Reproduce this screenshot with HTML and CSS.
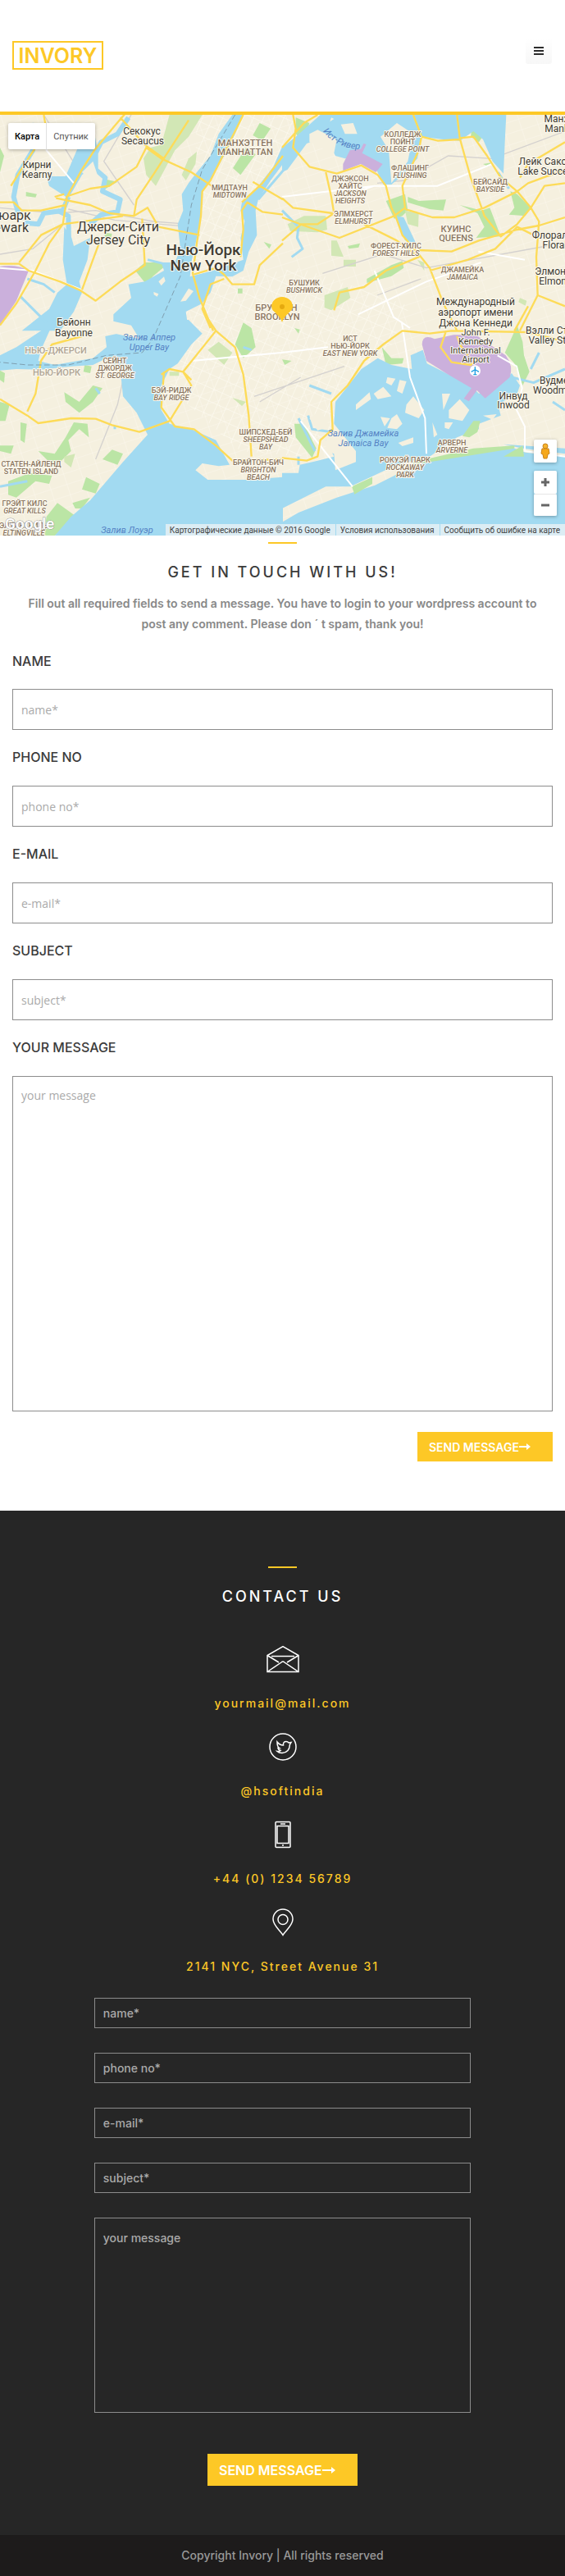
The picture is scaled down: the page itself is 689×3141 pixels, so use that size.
FILE: index.html
```html
<!DOCTYPE html>
<html lang="en">

<head>
    <meta charset="utf-8">
    <meta name="viewport" content="width=device-width, initial-scale=1.0">
    <title>Invory</title>
    <link rel="stylesheet" href="styles.css">
</head>

<body>
    <header class="header">
        <a class="logo" href="#">INVORY</a>
        <button class="menu-btn" type="button" aria-label="Menu">
            <span></span>
            <span></span>
            <span></span>
        </button>
    </header>

    <section class="map">
        <svg class="map-img" viewBox="0 0 689 513" preserveAspectRatio="xMidYMid slice">
            <!-- land, water and roads are drawn at three times the size, one group per quarter -->
            <svg width="689" height="513" viewBox="0 0 2067 1539">
                <defs>
                    <pattern id="streets" width="34" height="46" patternUnits="userSpaceOnUse" patternTransform="rotate(24)">
                        <path d="M0 0H34M0 0V46" stroke="#fffdf6" stroke-width="3" fill="none" />
                    </pattern>
                    <pattern id="streets2" width="62" height="40" patternUnits="userSpaceOnUse" patternTransform="rotate(-18)">
                        <path d="M0 0H62M0 0V40" stroke="#fbf8ee" stroke-width="3" fill="none" />
                    </pattern>
                </defs>
                <rect width="2067" height="1539" fill="#f5f0df" />
                <rect width="2067" height="1539" fill="url(#streets2)" />
                <path d="M720 0H1080L1020 220 900 400 860 560 700 600ZM700 620L1100 560 1500 700 1330 1060 1100 1250 880 1230 620 1000Z" fill="url(#streets)" />

                <!-- parks -->
                <g class="park" transform="translate(0 -30)">
                    <path class="light" d="M620 30H740L690 110 640 160 570 290 535 250 525 190 550 150 590 140Z" />
                    <path class="light" d="M720 165L715 210 680 270 665 250 690 190Z" />
                    <path d="M950 60L990 80 960 125 925 105ZM900 150L935 175 880 250 852 225ZM380 265L430 275 370 310ZM95 312L135 320 130 332 95 328ZM0 150L15 180 0 240ZM965 495L993 505 985 520ZM530 570L620 570 560 620 535 650 495 600ZM380 460L410 465 405 485 385 480ZM285 680L290 700 265 755 250 740ZM870 665H887V683H870Z" />
                </g>
                <g class="park" transform="translate(1032 -30)">
                    <path d="M50 40L100 60 80 130 50 100ZM695 75L740 100 720 130 690 110ZM380 345L450 320 460 380 440 400 410 410ZM460 330L500 345 600 340 590 380 540 375 460 350ZM650 360L730 380 760 370 800 475 710 480 740 440 715 390ZM835 310L860 320 910 370 890 400 830 395 850 370ZM240 510L285 500 280 515 245 520ZM310 630L400 580 440 565 445 590 400 620 310 645ZM735 210L765 205 755 220Z" />
                    <path class="light" d="M20 430L80 400 160 400 165 450 130 460 30 455ZM180 490L200 490 225 550 180 545ZM225 560L270 560 270 585H225ZM450 380L500 390 498 440 460 430ZM155 690L240 660 250 700 180 745 155 735ZM495 560L520 570 520 600ZM870 700L895 710 890 728 865 715Z" />
                </g>
                <g class="park" transform="translate(0 750)">
                    <path d="M860 90L890 10 920 30 935 100 890 140ZM340 240L375 250 340 300 290 340 240 300 235 265 290 300ZM75 375L98 380 90 450 75 440ZM270 375L320 380 325 430 290 400 250 440 260 480 200 540 140 480 200 490 240 430ZM0 300L35 310 20 370 0 370ZM0 460L50 460 40 490 0 480ZM30 590L110 560 190 570 180 600 130 590 60 650 30 640ZM315 575L365 600 350 635 300 620ZM410 475L450 490 430 530 375 510ZM170 720L210 670 280 720 200 790H160ZM265 670L330 650 300 690 275 690ZM310 165L335 170 330 195 305 190ZM0 185L18 195 15 230 0 220Z" />
                    <path class="light" d="M760 110L800 80 850 120 820 165ZM620 190H655V205H620ZM850 285L900 300 885 315ZM235 500L275 490 260 540 235 520Z" />
                </g>
                <g class="park" transform="translate(1032 750)">
                    <path d="M45 380L80 380 125 470 110 505 50 430ZM0 145L35 150 10 165ZM365 100L400 140 445 140 440 160 380 165ZM45 30L65 35 60 50ZM815 120L860 20 880 80 885 130 905 190 880 240 850 160Z" />
                </g>

                <!-- railways -->
                <g class="rail">
                    <path d="M0 340L200 360 350 350 560 390 690 400M250 345L420 385 700 410M480 0L380 170 490 330M160 0L280 190M0 510L120 490 230 400" />
                    <path d="M1380 250L1480 240 1640 150 1800 160 2067 60M1180 580L1400 510 1560 560 2000 480M1540 600L1380 660M930 1030L1260 920M1540 880L1560 1130M350 1260L430 1060 470 880M1100 960L950 1050" />
                </g>

                <!-- water -->
                <g class="water" transform="translate(0 -30)">
                    <path d="M850 30L800 100 770 180 720 240 690 280 665 320 670 380 650 430 660 520 640 570 590 570 600 600 530 640 470 650 480 700 415 760V820H690L680 750 740 720 770 680 790 620 850 622 890 600 910 530 940 470 935 380 945 340 990 270 1035 210V140L1000 220 930 310 885 350 880 380 895 420 880 480 890 560 780 600 695 622 700 570 720 480 735 400 740 310 780 250 820 180 860 100 890 30Z" />
                    <path d="M340 70L355 150 350 210 300 250 250 335 180 290 170 255 240 255 285 150ZM235 440L262 480 270 510 330 480 320 560 290 640 300 680 270 750 220 820H80L180 740 210 680 245 650 230 560Z" />
                    <path class="river" d="M470 40L430 100 370 130 350 170 350 230 385 260 375 310 440 340 430 385 370 395 330 430M250 330L230 380 160 390 140 430 90 425M210 380L250 400 252 500M115 60L120 160 65 250 50 330 70 400" />
                    <path class="creek" d="M100 630L160 650 200 680M75 695L170 790M945 340L1035 235M540 560L620 580" />
                </g>
                <g class="water" transform="translate(1032 -30)">
                    <path d="M140 30H820L815 130 810 245 770 200 735 120 700 90 650 125 590 120 510 110 495 190 430 260 400 285H370L340 220 290 180 230 190 195 180 160 110 90 135 20 230 0 240V150L50 110ZM415 400L445 405 490 500 450 490Z" />
                    <path class="creek" d="M0 380L60 440 55 480 75 520 35 550M790 240L830 300" />
                </g>
                <g class="water" transform="translate(0 750)">
                    <path d="M210 0L60 100 0 130V185L60 180 150 182 260 170 340 165 390 140 440 180 450 280 500 340 540 420 450 520 330 660 260 720 200 790H1035V575L900 585 760 585 715 550 740 525 800 535 840 530 790 440 700 400 620 380 590 330 590 240 620 180 650 160 700 90 740 50 690 0H415L480 40 385 60 390 100 340 140 200 165 140 150 150 110 190 20Z" />
                    <path class="creek" d="M350 250L365 270M0 610L100 590M420 390V400M890 100L920 110" />
                </g>
                <g class="water" transform="translate(1032 750)">
                    <path d="M195 300L290 180 350 140 400 165 475 180 470 130 515 110 530 160 690 240 720 270 800 230 840 195 870 240 860 270 790 310 800 350 720 380 720 400 640 430 540 500 420 530 250 610 160 610 60 660 0 690V560L60 560 65 530 130 515 190 500 160 440 190 380Z" />
                    <path d="M0 740L60 705 200 650 340 605 500 525 700 485 850 470 890 485 1035 500V790H0ZM810 455L1035 470V490L880 470Z" />
                    <path class="creek" d="M100 240L180 270M95 350L110 400 180 410M60 360L120 480M840 210L920 230 1035 180M990 300L1035 330M910 180L940 120M60 530V500" />
                </g>

                <!-- islands -->
                <g class="island" transform="translate(0 -30)">
                    <path d="M580 640L600 622 605 638 590 655ZM562 678L580 685 575 695 563 688ZM690 665L708 675 680 710 660 713ZM300 240L340 200 370 290 330 270ZM350 770L480 800 510 850 420 830Z" />
                </g>
                <g class="island" transform="translate(1032 -30)">
                    <path d="M100 100L130 85 200 120 190 170 100 130ZM215 65L260 60 275 100 230 100ZM360 110L420 60 480 100 460 200 400 280 390 160ZM180 40L190 45 175 55Z" />
                </g>
                <g class="island" transform="translate(1032 750)">
                    <path d="M270 310L320 265 325 290 270 330ZM335 270L370 245 400 280 350 290ZM385 210L415 215 400 240 380 230ZM430 220L455 225 440 270 420 260ZM455 310L480 280 520 330 500 360 450 340ZM400 360L420 345 440 380 420 400 385 395ZM585 270L615 270 590 330ZM610 330L650 290 685 330 660 370 610 360ZM595 375L625 375 610 400 595 395ZM550 375L568 420 555 430ZM425 450L480 430 480 450 440 462ZM735 350L785 345 770 365ZM360 355L395 360 375 390ZM100 360L140 330 175 390 130 405ZM160 420L190 380 270 480 270 520 195 550 190 490 160 480Z" />
                    <path class="green" d="M660 425L700 370 725 370 715 410 685 430ZM810 500L880 460 885 500ZM255 610L330 575 330 600 265 638ZM480 520L700 470 850 460 850 470 540 520 480 530Z" />
                </g>

                <!-- airports -->
                <g class="airport">
                    <path d="M0 555Q60 545 105 570L60 680 0 770Z" />
                    <path d="M1255 180L1280 130 1320 125 1330 105 1340 108 1325 140 1400 180 1375 210 1320 180 1255 205Z" />
                    <path d="M1544 840Q1545 800 1590 820L1660 805 1740 805 1850 880Q1880 920 1865 960L1775 1037 1745 1008 1715 1048 1697 1038 1725 1000 1640 950 1560 900Z" />
                </g>

                <!-- roads -->
                <g class="white-road">
                    <path d="M0 560L120 570 300 640M160 0L170 130 270 250M1470 760L1500 960 1555 1110 1560 1240M1310 730L1560 610 1760 540M1370 570L1440 740 1500 780M700 900L1030 870 1200 850M1820 880L1890 920 1910 1000 1890 1080 1920 1140 1920 1230 2067 1250M1100 1120L1290 1360M1250 300L1370 260M1032 300L1370 260 1600 260 1800 180M1750 500L1920 530" />
                </g>
                <g class="road" transform="translate(0 -30)">
                    <path d="M480 0L420 70 345 160 300 230 245 330 230 430 180 500 130 600 60 720 0 800M235 320L200 330M240 330L330 300 400 290 500 220 535 150 590 190 700 240 775 290M205 335L330 360 400 390 490 400 540 370 580 440 730 470M490 400L500 340 560 250 690 50M0 575L70 575 105 600 220 640 290 670 350 710 440 640 530 580 520 410M70 570L150 470 230 430 450 400M0 350L50 350 80 380 150 380 240 360M440 40L530 140 600 190M890 30L770 270 740 310 735 400 720 500 705 610 730 700 780 820M705 615L790 590 820 615 850 650H930L950 580 1035 500M880 550L890 450 885 380 905 350 960 385 1035 395M925 275L1035 340M770 810L740 740 770 650 820 630M1035 180L960 280 885 350M300 670L340 560 370 480M160 30L170 90 110 180 40 290" />
                </g>
                <g class="road" transform="translate(1032 -30)">
                    <path d="M40 30L50 80 40 150 100 220 200 245 290 215 350 250 380 290 400 370 415 400 440 470 500 540 540 590 590 720 640 820M0 150L80 60 130 30M160 240L180 330 190 390 130 430 70 430 0 490M0 335L40 370 185 390M0 405L80 435 210 480 410 400 450 370 440 290 500 160 510 110 480 30M640 30L650 115 700 110 750 180 800 260 860 310 910 370 860 430 800 475 740 400 730 370 690 260 650 115M510 110L570 125 650 120M450 375L550 405 630 405 740 370 860 310 900 280 1035 230M500 525L620 530 720 490 860 450 940 435 1035 405M540 600L680 560 780 520 860 440 920 470M910 370L940 420 930 550 935 690 870 820M910 370L960 290 1035 280M300 430L420 490 500 550 380 600 300 660 210 680 190 745M935 690L1035 730M1035 130L900 210 870 260" />
                </g>
                <g class="road" transform="translate(0 750)">
                    <path d="M0 290L100 350 140 378 260 360 350 362 410 385 510 410 620 370 700 240 670 190 790 40 750 -20M590 200L620 180 670 190 700 220M600 190L590 320 640 390 710 400 790 460 850 515 1035 510M790 40L860 100 890 200 910 350 920 500M100 335L130 270 150 150 190 90 300 60" />
                </g>
                <g class="road" transform="translate(1032 750)">
                    <path d="M0 505L90 515 130 500 140 440 185 400 180 300 240 240 300 150 370 90 440 40 540 50 620 40 900 45 1035 80M600 40L580 100 620 155 690 165 720 140M640 60L650 90 680 130M900 -50L850 40" />
                </g>
                <path class="border-line" d="M860 0L740 200 700 330 660 590 560 820 520 870 390 880 250 915 100 915 0 905" />
                <circle cx="1738" cy="936" r="20" fill="#fff" />
                <path d="M1738 922V950M1724 940L1738 932 1752 940M1732 950H1744" stroke="#1e9de0" stroke-width="4" fill="none" />
            </svg>

            <g class="place city">
                <text x="173" y="24">Секокус<tspan x="174" dy="12">Secaucus</tspan></text>
                <text x="45" y="65">Кирни<tspan x="45" dy="12">Kearny</tspan></text>
                <text x="90" y="257">Бейонн<tspan x="90" dy="13">Bayonne</tspan></text>
                <text x="694" y="9">Манхассет<tspan x="694" dy="12">Manhasset</tspan></text>
                <text x="668" y="61">Лейк Саксес<tspan x="668" dy="12">Lake Success</tspan></text>
                <text x="686" y="151">Флорал Парк<tspan x="690" dy="12">Floral Park</tspan></text>
                <text x="674" y="195">Элмонт<tspan x="676" dy="12">Elmont</tspan></text>
                <text x="678" y="267">Вэлли Стрим<tspan x="681" dy="12">Valley Stream</tspan></text>
                <text x="679" y="328">Вудмер<tspan x="679" dy="12">Woodmere</tspan></text>
                <text x="626" y="347">Инвуд<tspan x="626" dy="11">Inwood</tspan></text>
                <text x="580" y="232">Международный<tspan x="580" dy="13">аэропорт имени</tspan><tspan x="580" dy="13">Джона Кеннеди</tspan></text>
                <text class="small" x="580" y="269">John F.<tspan x="580" dy="11">Kennedy</tspan><tspan x="580" dy="11">International</tspan><tspan x="580" dy="11">Airport</tspan></text>
            </g>
            <g class="place town">
                <text x="144" y="142">Джерси-Сити<tspan x="144" dy="16">Jersey City</tspan></text>
                <text x="8" y="128">Ньюарк<tspan x="8" dy="15">Newark</tspan></text>
                <text class="main" x="248" y="171">Нью-Йорк<tspan x="248" dy="19">New York</tspan></text>
            </g>
            <g class="place borough">
                <text x="299" y="38">МАНХЭТТЕН<tspan x="299" dy="11">MANHATTAN</tspan></text>
                <text x="556" y="143">КУИНС<tspan x="556" dy="11">QUEENS</tspan></text>
                <text x="337" y="239">БРУКЛИН<tspan x="338" dy="11">BROOKLYN</tspan></text>
                <text class="pale" x="68" y="291">НЬЮ-ДЖЕРСИ</text>
                <text class="pale" x="69" y="318">НЬЮ-ЙОРК</text>
            </g>
            <g class="place area">
                <text x="280" y="92">МИДТАУН<tspan class="it" x="280" dy="9">MIDTOWN</tspan></text>
                <text x="491" y="27">КОЛЛЕДЖ<tspan x="491" dy="9">ПОЙНТ</tspan><tspan class="it" x="491" dy="9">COLLEGE POINT</tspan></text>
                <text x="500" y="68">ФЛАШИНГ<tspan class="it" x="500" dy="9">FLUSHING</tspan></text>
                <text x="427" y="81">ДЖЭКСОН<tspan x="427" dy="9">ХАЙТС</tspan><tspan class="it" x="427" dy="9">JACKSON</tspan><tspan class="it" x="427" dy="9">HEIGHTS</tspan></text>
                <text x="431" y="124">ЭЛМХЕРСТ<tspan class="it" x="431" dy="9">ELMHURST</tspan></text>
                <text x="598" y="85">БЕЙСАЙД<tspan class="it" x="598" dy="9">BAYSIDE</tspan></text>
                <text x="483" y="163">ФОРЕСТ-ХИЛС<tspan class="it" x="483" dy="9">FOREST HILLS</tspan></text>
                <text x="564" y="192">ДЖАМЕЙКА<tspan class="it" x="564" dy="9">JAMAICA</tspan></text>
                <text x="371" y="208">БУШУИК<tspan class="it" x="371" dy="9">BUSHWICK</tspan></text>
                <text x="427" y="276">ИСТ<tspan x="427" dy="9">НЬЮ-ЙОРК</tspan><tspan class="it" x="427" dy="9">EAST NEW YORK</tspan></text>
                <text x="140" y="303">СЕЙНТ<tspan x="140" dy="9">ДЖОРДЖ</tspan><tspan class="it" x="140" dy="9">ST. GEORGE</tspan></text>
                <text x="209" y="339">БЭЙ-РИДЖ<tspan class="it" x="209" dy="9">BAY RIDGE</tspan></text>
                <text x="324" y="390">ШИПСХЕД-БЕЙ<tspan class="it" x="324" dy="9">SHEEPSHEAD</tspan><tspan class="it" x="324" dy="9">BAY</tspan></text>
                <text x="315" y="427">БРАЙТОН-БИЧ<tspan class="it" x="315" dy="9">BRIGHTON</tspan><tspan class="it" x="315" dy="9">BEACH</tspan></text>
                <text x="38" y="429">СТАТЕН-АЙЛЕНД<tspan x="38" dy="9">STATEN ISLAND</tspan></text>
                <text x="30" y="477">ГРЭЙТ КИЛС<tspan class="it" x="30" dy="9">GREAT KILLS</tspan></text>
                <text x="29" y="504">ЭЛТИНГВИЛЬ<tspan class="it" x="29" dy="9">ELTINGVILLE</tspan></text>
                <text x="551" y="403">АРВЕРН<tspan class="it" x="551" dy="9">ARVERNE</tspan></text>
                <text x="494" y="424">РОКУЭЙ ПАРК<tspan class="it" x="494" dy="9">ROCKAWAY</tspan><tspan class="it" x="494" dy="9">PARK</tspan></text>
            </g>
            <g class="bay">
                <text x="182" y="275">Залив Аппер<tspan x="182" dy="12">Upper Bay</tspan></text>
                <text x="443" y="392">Залив Джамейка<tspan x="443" dy="12">Jamaica Bay</tspan></text>
                <text x="155" y="510">Залив Лоуэр</text>
                <path id="river" d="M392 18Q410 42 442 42" fill="none" />
                <text><textPath href="#river" startOffset="50%">Ист-Ривер</textPath></text>
            </g>
            <text class="google" x="6" y="505">Google</text>
            <path d="M344 253C341 243 331 240 331 234A13 12 0 0 1 357 234C357 240 347 243 344 253Z" fill="#fdc826" />
            <circle cx="344" cy="234" r="3" fill="#e5a90f" />
        </svg>

        <div class="map-type">
            <button class="active" type="button">Карта</button>
            <button type="button">Спутник</button>
        </div>
        <div class="map-tools">
            <button class="pegman" type="button" aria-label="Street View">
                <svg width="12" height="20" viewBox="0 0 12 20">
                    <circle cx="6" cy="4" r="3" fill="#f5b32d" stroke="#c98219" />
                    <path d="M2 7H10L11 13 9 14 8 19H4L3 14 1 13Z" fill="#f5a81c" stroke="#c98219" />
                </svg>
            </button>
            <div class="zoom">
                <button type="button" aria-label="Zoom in"><svg width="10" height="10" viewBox="0 0 10 10"><path d="M0 5H10M5 0V10" stroke="#666" stroke-width="3" /></svg></button>
                <button type="button" aria-label="Zoom out"><svg width="10" height="10" viewBox="0 0 10 10"><path d="M0 5H10" stroke="#666" stroke-width="3" /></svg></button>
            </div>
        </div>
        <div class="map-copy">
            <span>Картографические данные © 2016 Google</span>
            <a href="#">Условия использования</a>
            <a href="#">Сообщить об ошибке на карте</a>
        </div>
    </section>

    <section class="touch">
        <h2>GET IN TOUCH WITH US!</h2>
        <p>Fill out all required fields to send a message. You have to login to your wordpress account to post any comment. Please don ´ t spam, thank you!</p>
        <form class="touch-form">
            <label for="name">NAME</label>
            <input type="text" id="name" placeholder="name*">
            <label for="phone">PHONE NO</label>
            <input type="text" id="phone" placeholder="phone no*">
            <label for="email">E-MAIL</label>
            <input type="text" id="email" placeholder="e-mail*">
            <label for="subject">SUBJECT</label>
            <input type="text" id="subject" placeholder="subject*">
            <label for="message">YOUR MESSAGE</label>
            <textarea id="message" placeholder="your message"></textarea>
            <button class="send" type="button">SEND MESSAGE<svg width="14" height="8" viewBox="0 0 14 8"><path d="M0 3H9V0L14 4 9 8V5H0Z" fill="#fff" /></svg></button>
        </form>
    </section>

    <section class="contact">
        <h2>CONTACT US</h2>
        <ul class="contact-list">
            <li>
                <svg width="40" height="34" viewBox="0 0 40 34">
                    <path d="M1 12.500V32.500H39V12.500L20 1.500ZM1 12.500L15 21M39 12.500L25 21M1 32.500L18 21Q20 19 22 21L39 32.500M6 13.500H34" />
                </svg>
                <a href="#">yourmail@mail.com</a>
            </li>
            <li>
                <svg width="34" height="34" viewBox="0 0 34 34">
                    <circle cx="17" cy="17" r="16" />
                    <path d="M10 11Q13 15 17.500 15Q17 10.500 21 10.500Q23 10.500 24 12L27 11.500 25.500 14Q25 24 16 24.500Q12 24.500 10 22.500Q12.500 23 14 21.500Q11.500 21 11 18.500H12.500Q10 17 10 11Z" />
                </svg>
                <a href="#">@hsoftindia</a>
            </li>
            <li>
                <svg width="20" height="34" viewBox="0 0 20 34">
                    <rect x="1" y="1.500" width="18" height="31" rx="1" />
                    <path d="M3 6.500H17V27.500H3ZM7 4H13M9 30H11" />
                </svg>
                <a href="#">+44 (0) 1234 56789</a>
            </li>
            <li>
                <svg width="26" height="34" viewBox="0 0 26 34">
                    <path d="M13 32.500C10 27 1 21 1 13A12 12 0 0 1 25 13C25 21 16 27 13 32.500Z" />
                    <circle cx="13" cy="13.500" r="6" />
                </svg>
                <a href="#">2141 NYC, Street Avenue 31</a>
            </li>
        </ul>
        <form class="contact-form">
            <input type="text" placeholder="name*" aria-label="name">
            <input type="text" placeholder="phone no*" aria-label="phone no">
            <input type="text" placeholder="e-mail*" aria-label="e-mail">
            <input type="text" placeholder="subject*" aria-label="subject">
            <textarea placeholder="your message" aria-label="your message"></textarea>
            <button class="send big" type="button">SEND MESSAGE<svg width="16" height="8" viewBox="0 0 16 8"><path d="M0 3H11V0L16 4 11 8V5H0Z" fill="#fff" /></svg></button>
        </form>
    </section>

    <footer>Copyright Invory | All rights reserved</footer>
</body>

</html>
```
FILE: styles.css
```css
* {
    box-sizing: border-box;
}

body {
    margin: 0;
    font-family: Inter, "Open Sans", sans-serif;
    font-size: 14px;
    color: #3b3b3b;
    background: #fff;
}

button {
    border: 0;
    padding: 0;
    font-family: inherit;
    cursor: pointer;
}

/* header */
.header {
    display: flex;
    justify-content: space-between;
    align-items: flex-start;
    height: 140px;
    padding: 47px 16px 0 15px;
    border-bottom: 4px solid #fdc826;
}

.logo {
    width: 111px;
    height: 35px;
    margin-top: 3px;
    border: 2px solid #fdc826;
    color: #fdc826;
    font-size: 25px;
    font-weight: 600;
    line-height: 32px;
    text-align: center;
    text-decoration: none;
}

.menu-btn {
    display: flex;
    flex-direction: column;
    align-items: center;
    justify-content: center;
    gap: 2px;
    width: 32px;
    height: 31px;
    padding-bottom: 1px;
    background: linear-gradient(#fff, #f7f7f7);
    border-radius: 3px;
}

.menu-btn span {
    width: 12px;
    height: 2px;
    background: #2c2c2c;
}

/* map */
.map {
    position: relative;
    height: 513px;
    overflow: hidden;
    font-family: Roboto, sans-serif;
}

.map-img {
    display: block;
    width: 100%;
    height: 100%;
}

.park {
    fill: #bbe5a5;
}

.light {
    fill: #d2e7b5;
}

.water {
    fill: #a2daf1;
}

.river,
.creek {
    fill: none;
    stroke: #a2daf1;
    stroke-width: 18;
    stroke-linejoin: round;
}

.creek {
    stroke-width: 9;
}

.island {
    fill: #f5f0df;
}

.green {
    fill: #bbe5a5;
}

.airport {
    fill: #cbb0dc;
}

.rail {
    fill: none;
    stroke: #d4d1cf;
    stroke-width: 4;
}

.white-road {
    fill: none;
    stroke: #fff;
    stroke-width: 6;
}

.road {
    fill: none;
    stroke: #fddb58;
    stroke-width: 7;
    stroke-linejoin: round;
}

.border-line {
    fill: none;
    stroke: #7f9fb0;
    stroke-width: 3;
    stroke-dasharray: 20 10;
}

.place text {
    text-anchor: middle;
    paint-order: stroke;
    stroke: #fbf8ee;
    stroke-width: 2px;
    stroke-linejoin: round;
}

.city {
    font-size: 12px;
    fill: #413c33;
}

.city .small {
    font-size: 11px;
}

.town {
    font-size: 16px;
    fill: #413c33;
}

.town .main {
    font-size: 19px;
    font-weight: 500;
}

.borough {
    font-size: 11px;
    font-weight: 500;
    fill: #8a7560;
}

.borough .pale {
    fill: #b0a595;
}

.area {
    font-size: 9px;
    font-weight: 500;
    fill: #8a7560;
}

.it {
    font-style: italic;
}

.bay {
    font-size: 11px;
    font-style: italic;
    fill: #5481c4;
    text-anchor: middle;
}

.google {
    font-size: 19px;
    font-weight: 500;
    fill: #fff;
    paint-order: stroke;
    stroke: #999;
    stroke-width: 1px;
}

.map-type {
    position: absolute;
    top: 10px;
    left: 10px;
    display: flex;
    background: #fff;
    border-radius: 2px;
    box-shadow: 0 1px 4px rgba(0, 0, 0, 0.3);
}

.map-type button {
    height: 32px;
    padding: 0 8px;
    background: none;
    font-size: 11px;
    color: #565656;
}

.map-type .active {
    border-right: 1px solid #e0e0e0;
    color: #000;
    font-weight: 500;
}

.map-tools {
    position: absolute;
    right: 10px;
    bottom: 24px;
    display: flex;
    flex-direction: column;
    gap: 10px;
    width: 28px;
}

.map-tools button {
    display: flex;
    align-items: center;
    justify-content: center;
    width: 28px;
    height: 28px;
    background: #fff;
    border-radius: 2px;
}

.pegman,
.zoom {
    box-shadow: 0 1px 4px rgba(0, 0, 0, 0.3);
}

.zoom button + button {
    height: 27px;
    border-top: 1px solid #e6e6e6;
}

.map-copy {
    position: absolute;
    right: 0;
    bottom: 0;
    display: flex;
    height: 14px;
    background: rgba(245, 245, 245, 0.7);
    font-size: 10px;
    line-height: 16px;
    white-space: nowrap;
}

.map-copy span,
.map-copy a {
    padding: 0 6px 0 5px;
    color: #444;
    text-decoration: none;
}

.map-copy a {
    border-left: 1px solid #a2daf1;
}

/* get in touch */
h2 {
    margin: 0;
    font-size: 18px;
    font-weight: 500;
    line-height: 22px;
    letter-spacing: 3px;
    text-align: center;
}

h2::before {
    content: "";
    display: block;
    width: 35px;
    height: 2px;
    margin: 0 auto 24px;
    background: #fdc826;
}

.touch {
    padding: 8px 15px 60px;
}

.touch p {
    margin: 14px 0 23px;
    padding: 0 8px;
    color: #888;
    font-weight: 600;
    line-height: 25px;
    text-align: center;
}

.touch-form {
    display: flex;
    flex-direction: column;
}

.touch-form label {
    height: 68px;
    padding-top: 23px;
    font-size: 16px;
    font-weight: 500;
    line-height: 20px;
}

.touch-form label:first-child {
    height: 44px;
    padding-top: 0;
}

input,
textarea {
    display: block;
    width: 100%;
    height: 50px;
    margin: 0;
    padding: 0 10px;
    border: 1px solid #8c8c8c;
    border-radius: 0;
    background: transparent;
    font-family: "Open Sans", sans-serif;
    font-size: 14px;
}

textarea {
    height: 409px;
    padding-top: 13px;
    resize: none;
}

::placeholder {
    color: #aaa;
    opacity: 1;
}

.send {
    display: flex;
    align-items: center;
    align-self: flex-end;
    min-width: 165px;
    height: 36px;
    margin-top: 25px;
    padding: 0 22px 0 14px;
    background: #fdc826;
    color: #fff;
    font-size: 14px;
    font-weight: 600;
}

.send.big {
    align-self: center;
    min-width: 183px;
    height: 39px;
    margin-top: 20px;
    font-size: 16px;
}

/* contact */
.contact {
    padding: 68px 0 60px;
    background: #262626;
}

.contact h2 {
    color: #fff;
}

.contact-list {
    margin: 48px 0 28px;
    padding: 0;
    list-style: none;
}

.contact-list li {
    display: flex;
    flex-direction: column;
    align-items: center;
    gap: 27px;
    height: 107px;
}

.contact-list li:last-child {
    height: 81px;
}

.contact-list svg {
    fill: none;
    stroke: #fff;
    stroke-width: 1.500;
}

.contact-list a {
    color: #fdc826;
    font-weight: 500;
    line-height: 20px;
    letter-spacing: 2px;
    text-decoration: none;
}

.contact-form {
    display: flex;
    flex-direction: column;
    gap: 30px;
    width: calc(100% * 2 / 3);
    margin: 0 auto;
}

.contact-form input,
.contact-form textarea {
    height: 37px;
    font-family: inherit;
    font-weight: 500;
}

.contact-form textarea {
    height: 238px;
    padding-top: 15px;
}

footer {
    height: 50px;
    background: #1d1b1b;
    color: #999;
    font-weight: 500;
    line-height: 50px;
    text-align: center;
}
```
